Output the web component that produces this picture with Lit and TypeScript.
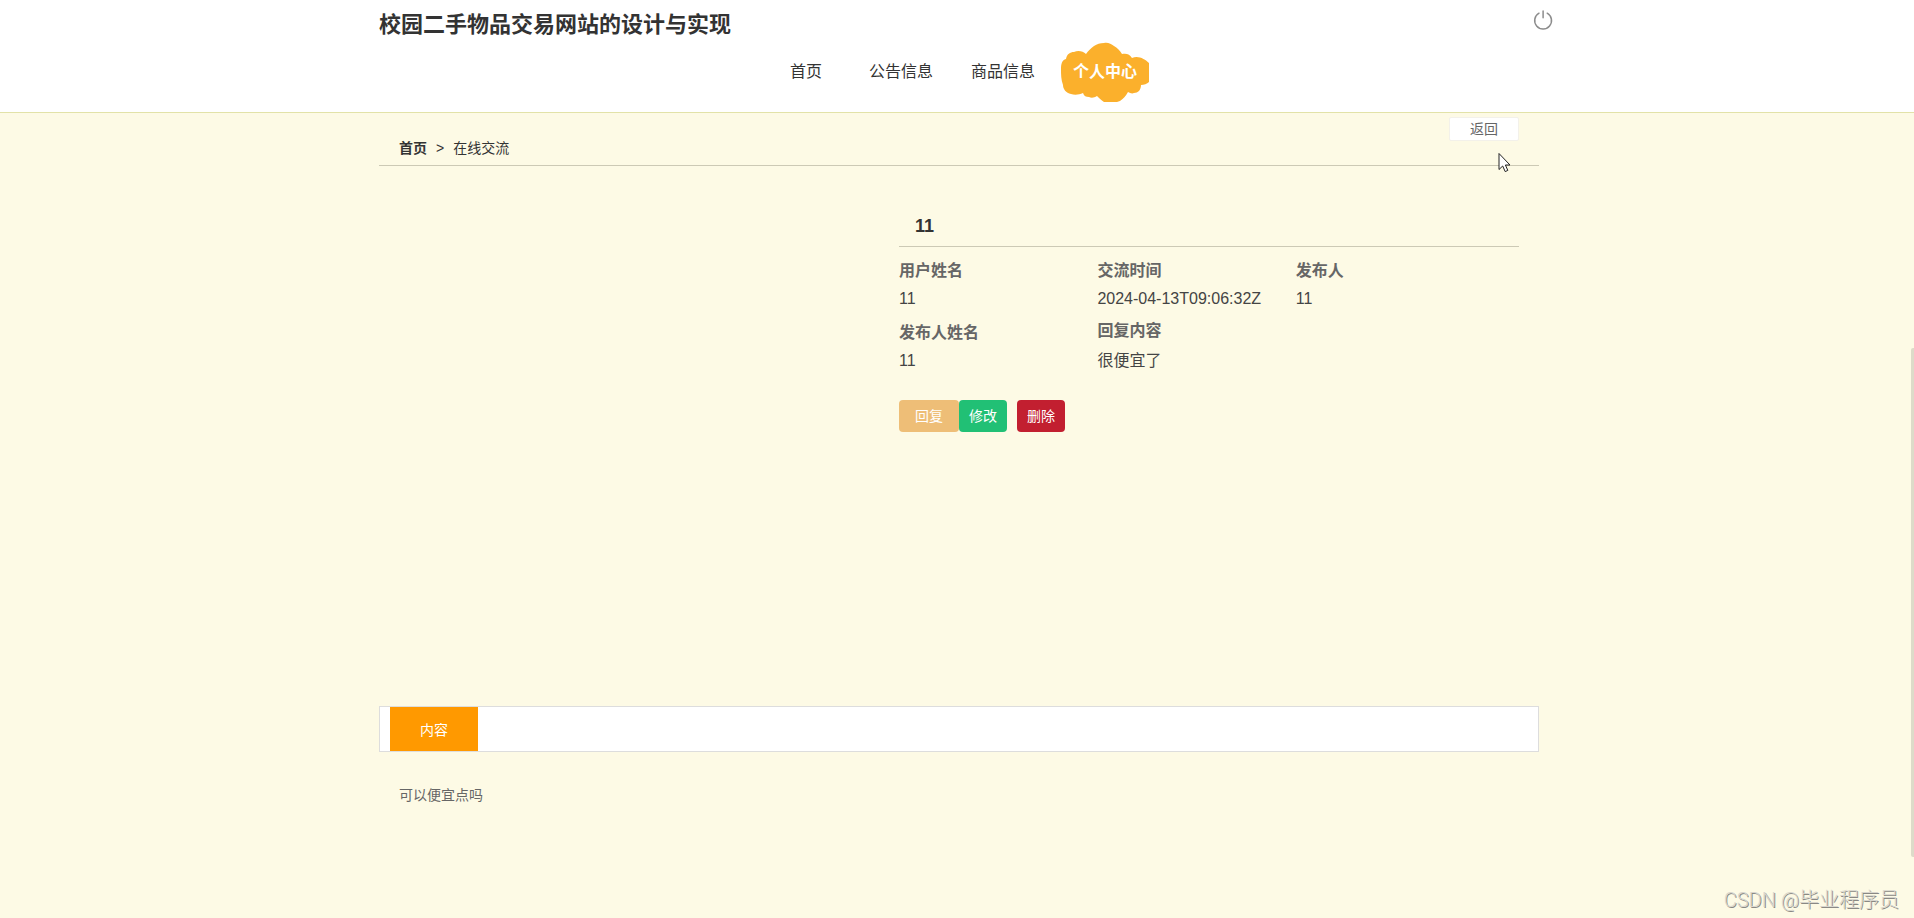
import { LitElement, html, css } from "lit";
import { customElement, state } from "lit/decorators.js";
import { classMap } from "lit/directives/class-map.js";

const fonts = css`"Liberation Sans", "Noto Sans CJK SC", sans-serif`;

@customElement("site-header")
class SiteHeader extends LitElement {
  static styles = css`
    :host {
      display: block;
      padding-left: 4px;
      background: #fff;
      border-bottom: 1px solid #e2e2a8;
      font-family: ${fonts};
    }
    .inner {
      max-width: 1160px;
      height: 112px;
      margin: 0 auto;
      position: relative;
    }
    .title {
      margin: 0;
      padding-top: 9px;
      font-size: 22px;
      line-height: 32px;
      font-weight: 700;
      color: #333;
    }
    .logout {
      position: absolute;
      top: 8px;
      right: -16px;
      width: 24px;
      height: 24px;
      padding: 0;
      border: 0;
      background: none;
      cursor: pointer;
    }
    .logout svg {
      display: block;
    }
    .nav {
      display: flex;
      justify-content: center;
    }
    .link {
      position: relative;
      min-width: 50px;
      padding: 0 19px;
      text-align: center;
      font-size: 16px;
      line-height: 62px;
      color: #333;
      text-decoration: none;
    }
    .active {
      color: #fff;
      font-weight: 700;
    }
    .cloud {
      position: absolute;
      left: 7px;
      top: 1px;
    }
    .text {
      position: relative;
    }
  `;
  private links = ["首页", "公告信息", "商品信息", "个人中心"];
  render() {
    return html`
      <div class="inner">
        <h1 class="title">校园二手物品交易网站的设计与实现</h1>
        <button class="logout" aria-label="退出">
          <svg width="24" height="24" viewBox="0 0 24 24" fill="none" stroke="#8c8c8c" stroke-width="1.5" stroke-linecap="round">
            <path d="M8 5.2A8.4 8.4 0 1 0 16.2 5.2M12.1 3V9.8" />
          </svg>
        </button>
        <nav class="nav">
          ${this.links.map((name, i) => {
            const active = i === 3;
            return html`<a class=${classMap({ link: true, active })} href="#">
              ${active
                ? html`<svg class="cloud" width="88" height="60" viewBox="0 0 88 60">
                    <path
                      fill="#fbb02c"
                      d="M25 12C27 9 30 6 33 4C36 2 39 1 43 1C47 0 50 2 53 4C57 6 59 9 61 12C65 11 69 12 71 16C77 13 84 17 88 21V40C86 42 83 43 80 43C80 48 77 51 73 51C71 52 69 51 67 50C65 54 62 57 59 59L56 60H43C40 58 38 56 36 54C33 56 30 56 28 55C25 55 23 54 22 51C18 53 13 53 10 52C5 51 2 47 2 43C0 38 0 32 0 27C0 22 1 18 5 17C6 12 9 10 13 10C17 8 22 9 25 12Z"
                    />
                  </svg>`
                : ""}<span class="text">${name}</span></a>`;
          })}
        </nav>
      </div>
    `;
  }
}

@customElement("chat-detail")
class ChatDetail extends LitElement {
  static styles = css`
    :host {
      display: block;
      padding-left: 4px;
      font-family: ${fonts};
      font-size: 14px;
      color: #666;
    }
    .page {
      max-width: 1160px;
      margin: 0 auto;
      position: relative;
    }
    .crumbs {
      display: flex;
      gap: 9px;
      padding: 23px 20px 5px;
      line-height: 24px;
      color: #333;
      border-bottom: 1px solid #ccc9b5;
    }
    .crumbs a {
      color: #333;
      font-weight: 700;
      text-decoration: none;
    }
    .back {
      position: absolute;
      top: 4px;
      right: 20px;
      width: 70px;
      height: 24px;
      padding: 0 0 2px;
      border: 1px solid #f3f1ea;
      border-radius: 2px;
      background: #fff;
      font: inherit;
      color: #666;
    }
    .info {
      max-width: 620px;
      min-height: 460px;
      margin: 40px 20px 40px auto;
    }
    .name {
      margin: 0;
      padding: 4px 16px 4px;
      font-size: 18px;
      line-height: 32px;
      color: #333;
      border-bottom: 1px solid #ccc9b5;
    }
    .fields {
      display: grid;
      grid-template-columns: repeat(3, 32%);
      row-gap: 4px;
      align-items: end;
      margin: 10px 0 25px;
      font-size: 16px;
      line-height: 28px;
    }
    dt {
      font-weight: 700;
    }
    dd {
      margin: 0;
      color: #444;
    }
    .reply dd {
      margin-top: 2px;
    }
    .actions {
      display: flex;
    }
    .btn {
      height: 32px;
      padding: 0 10px 2px;
      border: 0;
      border-radius: 4px;
      font: inherit;
      color: #fff;
    }
    .answer {
      padding: 0 16px 2px;
      background: #eebe77;
    }
    .edit {
      background: #21c075;
    }
    .delete {
      margin-left: 10px;
      background: #c21f30;
    }
    .tabs {
      display: flex;
      padding: 0 10px;
      background: #fff;
      border: 1px solid #ddd;
    }
    .tab {
      width: 88px;
      height: 44px;
      padding: 0;
      border: 0;
      background: #ff9900;
      color: #fff;
      font: inherit;
    }
    .content {
      margin: 0;
      padding: 31px 20px;
      line-height: 24px;
    }
  `;
  @state() private fields = [
    ["用户姓名", "11"],
    ["交流时间", "2024-04-13T09:06:32Z"],
    ["发布人", "11"],
    ["发布人姓名", "11"],
    ["回复内容", "很便宜了"],
  ];
  render() {
    return html`
      <main class="page">
        <nav class="crumbs"><a href="#">首页</a><span>&gt;</span><span>在线交流</span></nav>
        <button class="back">返回</button>
        <section class="info">
          <h2 class="name">11</h2>
          <dl class="fields">
            ${this.fields.map(
              ([label, value]) => html`<div class=${classMap({ reply: label === "回复内容" })}>
                <dt>${label}</dt>
                <dd>${value}</dd>
              </div>`
            )}
          </dl>
          <div class="actions">
            <button class="btn answer">回复</button>
            <button class="btn edit">修改</button>
            <button class="btn delete">删除</button>
          </div>
        </section>
        <div class="tabs"><button class="tab">内容</button></div>
        <p class="content">可以便宜点吗</p>
      </main>
    `;
  }
}

@customElement("app-root")
class AppRoot extends LitElement {
  static styles = css`
    :host {
      display: block;
      position: relative;
      min-height: 100vh;
      overflow: hidden;
      background: #fdfae5;
    }
    .pointer {
      position: absolute;
      left: 1498px;
      top: 152px;
    }
    .thumb {
      position: absolute;
      right: 0;
      top: 348px;
      width: 3px;
      height: 509px;
      border-radius: 2px 0 0 2px;
      background: #dddbc9;
    }
    .mark {
      position: absolute;
      right: 15px;
      bottom: 3px;
      font: 300 20px/30px Roboto, "Noto Sans CJK SC", sans-serif;
      color: #d8d6ce;
      text-shadow: 1px 1px 0 #8a8984;
    }
  `;
  render() {
    return html`
      <site-header></site-header>
      <chat-detail></chat-detail>
      <svg class="pointer" width="14" height="22" viewBox="0 0 14 22">
        <path d="M1 1.5V17.5L4.7 14L7.2 19.6L9.8 18.4L7.4 13H12Z" fill="#fff" stroke="#222" />
      </svg>
      <div class="thumb"></div>
      <div class="mark">CSDN @毕业程序员</div>
    `;
  }
}
